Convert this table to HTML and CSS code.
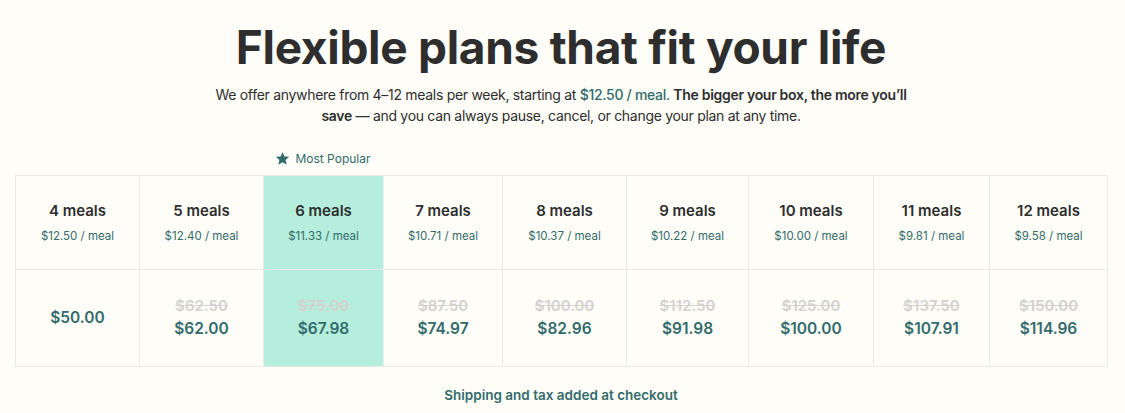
FILE: index.html
```html
<!DOCTYPE html>
<html>
<head>
<meta charset="utf-8">
<link rel="stylesheet" href="styles.css">
</head>
<body>
<main class="page">
  <h1 class="title">Flexible plans that fit your life</h1>
  <p class="intro">We offer anywhere from 4–12 meals per week, starting at <span class="accent">$12.50 / meal</span>. <b>The bigger your box, the more you’ll save</b> — and you can always pause, cancel, or change your plan at any time.</p>
  <div class="popular-row">
    <div class="popular">
      <svg class="star" viewBox="0 0 24 24" width="15" height="15"><path d="M12 1.5l3.1 7.1 7.6.7-5.8 5.1 1.8 7.6L12 18l-6.7 4 1.8-7.6-5.8-5.1 7.6-.7z" fill="#336b6b"/></svg>
      <span>Most Popular</span>
    </div>
  </div>
  <div class="plans">
    <div class="cell head"><div class="meals">4 meals</div><div class="per">$12.50 / meal</div></div>
    <div class="cell head"><div class="meals">5 meals</div><div class="per">$12.40 / meal</div></div>
    <div class="cell head hl"><div class="meals">6 meals</div><div class="per">$11.33 / meal</div></div>
    <div class="cell head"><div class="meals">7 meals</div><div class="per">$10.71 / meal</div></div>
    <div class="cell head"><div class="meals">8 meals</div><div class="per">$10.37 / meal</div></div>
    <div class="cell head"><div class="meals">9 meals</div><div class="per">$10.22 / meal</div></div>
    <div class="cell head"><div class="meals">10 meals</div><div class="per">$10.00 / meal</div></div>
    <div class="cell head"><div class="meals">11 meals</div><div class="per">$9.81 / meal</div></div>
    <div class="cell head last"><div class="meals">12 meals</div><div class="per">$9.58 / meal</div></div>

    <div class="cell price bottom"><div class="now">$50.00</div></div>
    <div class="cell price bottom"><div class="was">$62.50</div><div class="now">$62.00</div></div>
    <div class="cell price bottom hl"><div class="was">$75.00</div><div class="now">$67.98</div></div>
    <div class="cell price bottom"><div class="was">$87.50</div><div class="now">$74.97</div></div>
    <div class="cell price bottom"><div class="was">$100.00</div><div class="now">$82.96</div></div>
    <div class="cell price bottom"><div class="was">$112.50</div><div class="now">$91.98</div></div>
    <div class="cell price bottom"><div class="was">$125.00</div><div class="now">$100.00</div></div>
    <div class="cell price bottom"><div class="was">$137.50</div><div class="now">$107.91</div></div>
    <div class="cell price bottom last"><div class="was">$150.00</div><div class="now">$114.96</div></div>
  </div>
  <p class="shipping">Shipping and tax added at checkout</p>
</main>
</body>
</html>
```

FILE: styles.css
```css
html, body {
  margin: 0;
  padding: 0;
  background: #fefdf8;
}
body {
  font-family: "Inter", "Liberation Sans", sans-serif;
  color: #2e2e2e;
}
.page {
  width: 1092px;
  margin: 0 auto;
  padding: 0 18px 0 15px;
  display: flex;
  flex-direction: column;
  align-items: center;
}
.title {
  margin: 19px 0 0;
  font-size: 46px;
  line-height: 56px;
  font-weight: 700;
  letter-spacing: -0.3px;
  color: #2e2e2e;
}
.intro {
  margin: 9px 0 0;
  width: 720px;
  text-align: center;
  font-size: 14px;
  line-height: 21px;
  letter-spacing: -0.3px;
  color: #2e2e2e;
}
.intro b { font-weight: 600; }
.accent { color: #336b6b; font-weight: 500; }
.popular-row {
  align-self: stretch;
  display: grid;
  grid-template-columns: 124px 124px 120px 1fr;
  margin-top: 25px;
  height: 24px;
}
.popular {
  grid-column: 3;
  display: flex;
  align-items: center;
  justify-content: center;
  gap: 5px;
  font-size: 12px;
  color: #336b6b;
  white-space: nowrap;
  height: 14px;
}
.star { display: block; }
.plans {
  align-self: stretch;
  display: grid;
  grid-template-columns: 124px 124px 120px 119px 124px 122px 125px 116px 118px;
  grid-template-rows: 94px 97px;
  border-top: 1px solid #ebe9e3;
  border-left: 1px solid #ebe9e3;
  box-sizing: border-box;
}
.cell {
  border-right: 1px solid #ebe9e3;
  border-bottom: 1px solid #ebe9e3;
  display: flex;
  flex-direction: column;
  align-items: center;
  justify-content: center;
  text-align: center;
}
.head { padding-bottom: 2px; }
.hl { background: #b5eedc; border-right-color: #e6f3ec; }
.meals {
  font-size: 15px;
  font-weight: 600;
  color: #2e2e2e;
  line-height: 20px;
}
.per {
  margin-top: 8px;
  font-size: 11.5px;
  color: #336b6b;
  line-height: 14px;
}
.price { padding-bottom: 2px; }
.was {
  font-size: 15px;
  font-weight: 600;
  color: #d3d2cf;
  text-decoration: line-through;
  line-height: 23px;
}
.now {
  font-size: 15.5px;
  font-weight: 600;
  color: #336b6b;
  line-height: 23px;
}
.shipping {
  margin: 20px 0 0;
  font-size: 13.5px;
  font-weight: 600;
  color: #336b6b;
}
```
